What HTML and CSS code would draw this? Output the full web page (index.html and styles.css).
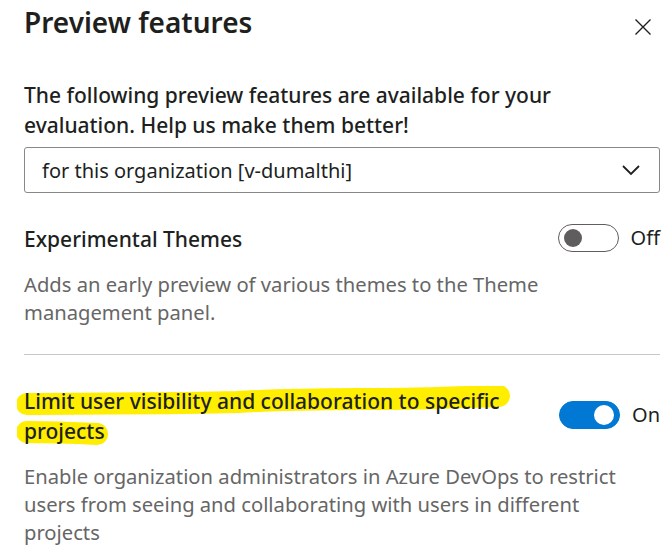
FILE: index.html
```html
<!DOCTYPE html>
<html lang="en">
<head>
    <meta charset="UTF-8">
    <meta name="viewport" content="width=device-width, initial-scale=1.0">
    <title>Preview features</title>
    <link rel="stylesheet" href="styles.css">
</head>
<body>
    <div class="panel">
        <div class="panel-header">
            <h1>Preview features</h1>
            <button class="close-button" aria-label="Close">
                <svg width="18" height="18" viewBox="0 0 18 18">
                    <path d="M1.5 1.5 L16.5 16.5 M16.5 1.5 L1.5 16.5" stroke="#201f1e" stroke-width="1.4" fill="none"/>
                </svg>
            </button>
        </div>

        <p class="intro">The following preview features are available for your evaluation. Help us make them better!</p>

        <div class="dropdown">
            <span>for this organization [v-dumalthi]</span>
            <svg width="20" height="12" viewBox="0 0 20 12">
                <path d="M2 2 L10 10 L18 2" stroke="#201f1e" stroke-width="1.8" fill="none"/>
            </svg>
        </div>

        <!-- Experimental Themes -->
        <div class="feature first">
            <div class="feature-row">
                <h2 class="feature-title">Experimental Themes</h2>
                <div class="toggle-group">
                    <span class="toggle"><span class="knob"></span></span>
                    <span class="toggle-label">Off</span>
                </div>
            </div>
            <p class="feature-desc">Adds an early preview of various themes to the Theme management panel.</p>
        </div>

        <!-- Limit user visibility -->
        <div class="feature">
            <div class="feature-row">
                <h2 class="feature-title highlighted">
                    <svg class="marker" width="520" height="70" viewBox="0 0 520 70">
                        <path d="M10 18 C 80 17, 150 18, 220 16 C 290 12, 360 14, 420 12 C 445 11, 465 11, 482 10" stroke="#ffee00" stroke-width="22" stroke-linecap="round" fill="none"/>
                        <path d="M10 46 C 35 46, 60 47, 80 48" stroke="#ffee00" stroke-width="22" stroke-linecap="round" fill="none"/>
                    </svg>
                    <span class="title-text">Limit user visibility and collaboration to specific projects</span>
                </h2>
                <div class="toggle-group">
                    <span class="toggle on"><span class="knob"></span></span>
                    <span class="toggle-label">On</span>
                </div>
            </div>
            <p class="feature-desc">Enable organization administrators in Azure DevOps to restrict users from seeing and collaborating with users in different projects</p>
        </div>
    </div>
</body>
</html>
```

FILE: styles.css
```css
body {
    margin: 0;
    background: #ffffff;
    color: #201f1e;
    font-family: "Segoe UI", "Noto Sans", sans-serif;
}
.panel {
    width: 636px;
    padding: 1px 10px 0 24px;
}
.panel-header {
    display: flex;
    justify-content: space-between;
    align-items: center;
    height: 42px;
}
h1 {
    margin: 0;
    font-size: 28px;
    font-weight: 600;
    line-height: 40px;
}
.close-button {
    background: none;
    border: none;
    padding: 0;
    margin-right: 8px;
    margin-top: 10px;
    display: flex;
}
.intro {
    margin: 37px 0 0 0;
    font-size: 21px;
    font-weight: 500;
    line-height: 30px;
    width: 580px;
}
.dropdown {
    margin-top: 7px;
    height: 46px;
    box-sizing: border-box;
    border: 1px solid #8a8886;
    border-radius: 3px;
    display: flex;
    align-items: center;
    justify-content: space-between;
    padding: 0 18px 0 17px;
    font-size: 20px;
}
.feature {
    padding-top: 31px;
}
.feature.first {
    border-bottom: 1px solid #c8c6c4;
    padding-bottom: 28px;
}
.feature-row {
    display: flex;
    justify-content: space-between;
    align-items: center;
}
.feature-title {
    margin: 0;
    font-size: 21px;
    font-weight: 500;
    line-height: 30px;
    width: 510px;
}
.highlighted {
    position: relative;
}
.marker {
    position: absolute;
    left: -7px;
    top: 0;
}
.title-text {
    position: relative;
}
.toggle-group {
    display: flex;
    align-items: center;
    gap: 12px;
    margin-top: -3px;
}
.toggle {
    box-sizing: border-box;
    width: 61px;
    height: 28px;
    border: 1px solid #605e5c;
    border-radius: 14px;
    display: flex;
    align-items: center;
    padding: 0 5px;
}
.toggle .knob {
    width: 18px;
    height: 18px;
    border-radius: 50%;
    background: #605e5c;
}
.toggle.on {
    background: #0078d4;
    border-color: #0078d4;
    justify-content: flex-end;
}
.toggle.on .knob {
    width: 20px;
    height: 20px;
    background: #ffffff;
}
.toggle-label {
    font-size: 20px;
    line-height: 30px;
}
.feature-desc {
    margin: 16px 0 0 0;
    font-size: 20.2px;
    line-height: 28px;
    color: #666666;
    width: 600px;
}
```
